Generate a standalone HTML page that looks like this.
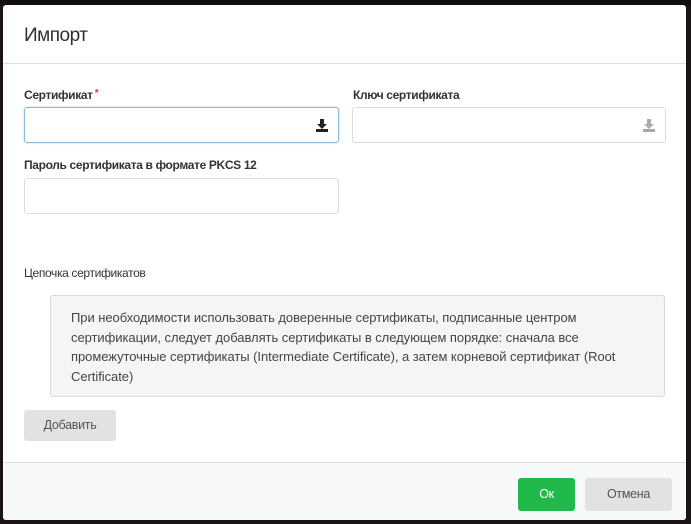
<!DOCTYPE html>
<html><head><meta charset="utf-8"><style>
*{box-sizing:border-box;margin:0;padding:0}
body{width:691px;height:524px;background:#1b1414;font-family:"Liberation Sans",sans-serif;overflow:hidden;position:relative}
.top{position:absolute;left:0;top:0;width:691px;height:6px;background:#120e0e}
.m{position:absolute;left:3px;top:5px;width:683px;height:515px;background:#fff;border-radius:3px;overflow:hidden}
.h{height:59px;border-bottom:1px solid #dcdfe3;padding:20px 0 0 21px;font-size:19px;color:#2b2f33;letter-spacing:-0.5px}
.lbl{position:absolute;font-size:12px;font-weight:bold;color:#333;letter-spacing:-0.35px}
.in{position:absolute;height:36px;border:1px solid #d9dce0;border-radius:3px;background:#fff}
.ic{position:absolute;right:10px;top:11px}
.note{position:absolute;left:47px;top:290px;width:615px;height:102px;background:#f5f5f5;border:1px solid #d7d9dc;border-radius:3px;padding:12px 0 0 20px;font-size:13px;line-height:19.5px;color:#444;letter-spacing:-0.05px;white-space:nowrap}
.btn{position:absolute;border-radius:3px;font-size:12.5px;text-align:center;letter-spacing:-0.3px}
.f{position:absolute;left:0;top:457px;width:683px;height:58px;background:#f7f8fa;border-top:1px solid #dcdfe3}
</style></head><body>
<div class="top"></div>
<div class="m">
<div class="h">Импорт</div>
<div class="lbl" style="left:21px;top:83px">Сертификат<span style="color:#e33;font-size:10px;vertical-align:top;margin-left:2px">*</span></div>
<div class="lbl" style="left:350px;top:83px">Ключ сертификата</div>
<div class="in" style="left:21px;top:102px;width:315px;border-color:#8fb7de;box-shadow:0 0 2px #b9d3ec">
<svg class="ic" width="12" height="13" viewBox="0 0 12 13"><path d="M4 0h4v5h3l-5 5-5-5h3z" fill="#222"/><rect x="0" y="10" width="12" height="3" fill="#222"/></svg></div>
<div class="in" style="left:349px;top:102px;width:314px">
<svg class="ic" width="12" height="13" viewBox="0 0 12 13"><path d="M4 0h4v5h3l-5 5-5-5h3z" fill="#aaa"/><rect x="0" y="10" width="12" height="3" fill="#aaa"/></svg></div>
<div class="lbl" style="left:21px;top:153px">Пароль сертификата в формате PKCS 12</div>
<div class="in" style="left:21px;top:173px;width:315px"></div>
<div class="lbl" style="left:21px;top:261px;font-weight:normal;color:#333">Цепочка сертификатов</div>
<div class="note">При необходимости использовать доверенные сертификаты, подписанные центром<br>сертификации, следует добавлять сертификаты в следующем порядке: сначала все<br>промежуточные сертификаты (Intermediate Certificate), а затем корневой сертификат (Root<br>Certificate)</div>
<div class="btn" style="left:21px;top:405px;width:92px;height:31px;line-height:31px;background:#e1e2e4;color:#555">Добавить</div>
<div class="f">
<div class="btn" style="left:515px;top:15px;width:57px;height:33px;line-height:33px;background:#21b94a;color:#fff">Ок</div>
<div class="btn" style="left:582px;top:15px;width:87px;height:33px;line-height:33px;background:#e1e2e4;color:#555">Отмена</div>
</div>
</div>
</body></html>
